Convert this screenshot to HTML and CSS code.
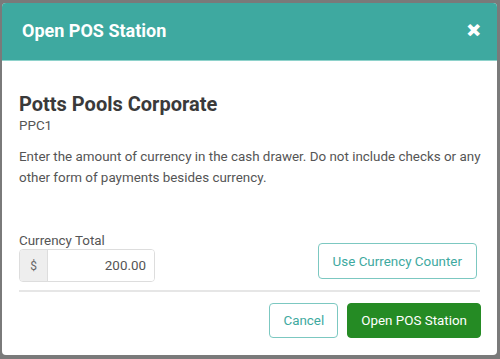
FILE: index.html
```html
<!DOCTYPE html>
<html lang="en">
<head>
    <meta charset="UTF-8">
    <title>Open POS Station</title>
    <link rel="stylesheet" href="styles.css">
</head>
<body>
    <div class="modal">
        <div class="modal-header">
            <h2>Open POS Station</h2>
            <span class="close">&#x2715;</span>
        </div>
        <div class="modal-body">
            <h3>Potts Pools Corporate</h3>
            <div class="code">PPC1</div>
            <p>Enter the amount of currency in the cash drawer. Do not include checks or any other form of payments besides currency.</p>
            <div class="currency-row">
                <div class="field">
                    <label>Currency Total</label>
                    <div class="input-group">
                        <span class="addon">$</span>
                        <input type="text" value="200.00">
                    </div>
                </div>
                <button class="btn btn-outline btn-counter">Use Currency Counter</button>
            </div>
        </div>
        <div class="modal-footer">
            <button class="btn btn-outline">Cancel</button>
            <button class="btn btn-primary">Open POS Station</button>
        </div>
    </div>
</body>
</html>
```

FILE: styles.css
```css
* {
    margin: 0;
    padding: 0;
    box-sizing: border-box;
    font-family: Roboto, 'Liberation Sans', sans-serif;
}

body {
    background: #7a7a7a;
    padding: 3px 3px 4px 2px;
}

.modal {
    width: 495px;
    height: 352px;
    background: white;
    border-radius: 4px;
    overflow: hidden;
    color: #555;
}

.modal-header {
    height: 58px;
    background: #3ea9a0;
    border-bottom: 1px solid #8ed2cb;
    display: flex;
    align-items: center;
    justify-content: space-between;
    padding: 0 17px 3px 20px;
}

.modal-header h2 {
    color: white;
    font-size: 18px;
    font-weight: bold;
}

.close {
    color: white;
    font-size: 16px;
    font-weight: bold;
    -webkit-text-stroke: 1.5px white;
}

.modal-body {
    padding: 31px 17px 0;
}

.modal-body h3 {
    font-size: 20px;
    font-weight: bold;
    color: #3a3a3a;
    line-height: 24px;
}

.code {
    font-size: 13.4px;
    line-height: 20px;
}

.modal-body p {
    font-size: 13.4px;
    line-height: 21px;
    margin-top: 10px;
    margin-right: -4px;
}

.currency-row {
    display: flex;
    justify-content: space-between;
    align-items: flex-end;
    margin-top: 45px;
    padding-bottom: 8px;
    border-bottom: 2px solid #e6e6e6;
}

.field label {
    display: block;
    font-size: 13.4px;
    line-height: 16px;
}

.input-group {
    display: flex;
    width: 136px;
    height: 33px;
    border: 1px solid #ddd;
    border-radius: 4px;
    overflow: hidden;
}

.addon {
    width: 28px;
    background: #eee;
    border-right: 1px solid #ddd;
    display: flex;
    align-items: center;
    justify-content: center;
    font-size: 12px;
    color: #666;
}

.input-group input {
    flex: 1;
    min-width: 0;
    border: none;
    text-align: right;
    font-size: 13.4px;
    color: #555;
    padding-right: 8px;
}

.btn {
    font-size: 13.4px;
    height: 35px;
    padding: 0 13px;
    border-radius: 4px;
    cursor: pointer;
}

.btn-counter {
    height: 36px;
    padding: 0 14px;
    margin: 0 3px 3px 0;
}

.btn-outline {
    background: white;
    border: 1px solid #7cc8c1;
    color: #3ea9a0;
}

.btn-primary {
    background: #258b24;
    border: 1px solid #258b24;
    color: white;
}

.modal-footer {
    display: flex;
    justify-content: flex-end;
    gap: 9px;
    padding: 11px 16px 0;
}
```
